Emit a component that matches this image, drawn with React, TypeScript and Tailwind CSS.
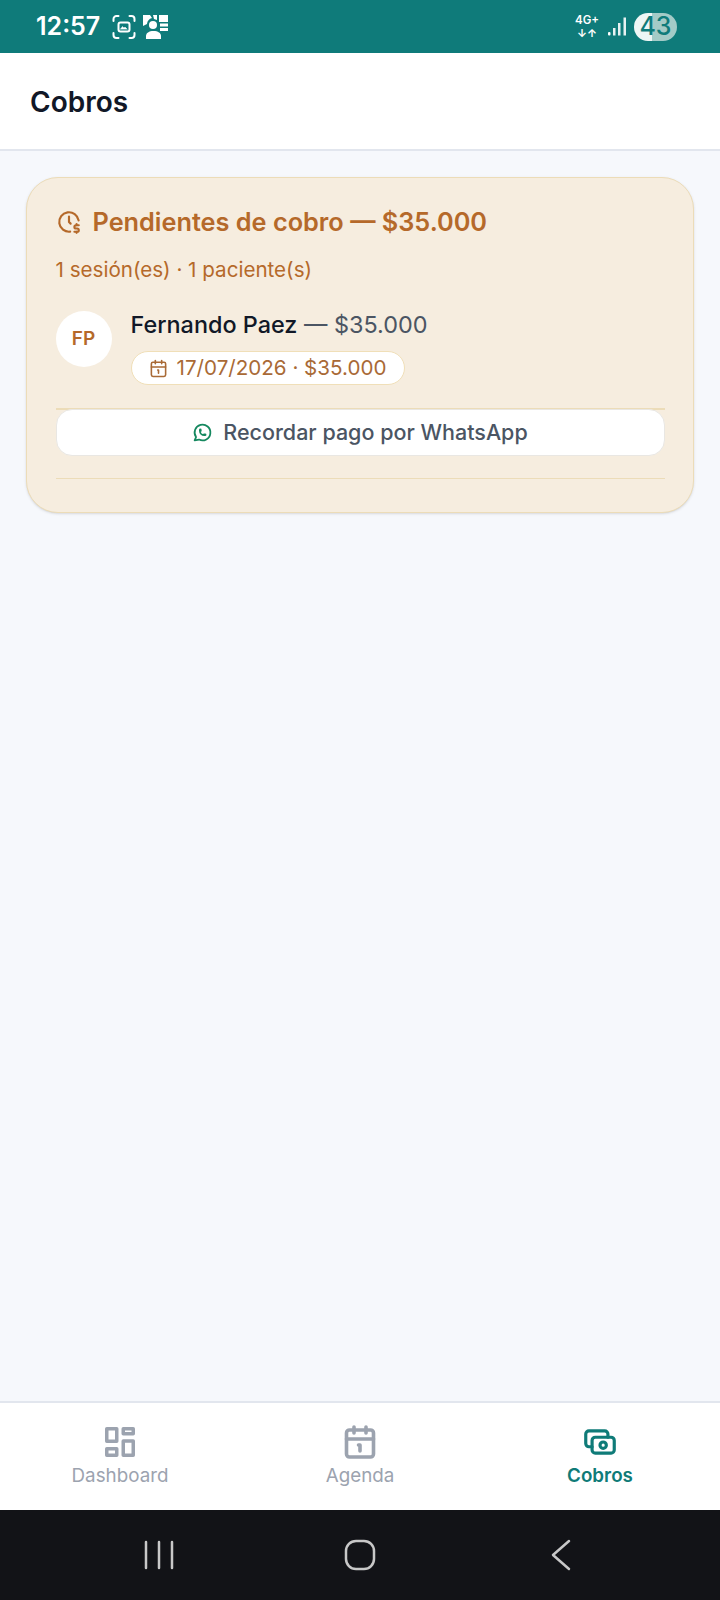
import React from 'react';
import { Calendar1 } from 'lucide-react';
import { TbClockDollar, TbBrandWhatsapp, TbCash } from 'react-icons/tb';

// Iconos de la barra de estado
const ScanIcon = () => (
  <svg width="24" height="24" viewBox="0 0 24 24" fill="none" stroke="white" strokeWidth="2" strokeLinecap="round">
    <path d="M1.500 6V4a3 3 0 0 1 3-3h2M17.500 1h2a3 3 0 0 1 3 3v2M22.500 18v2a3 3 0 0 1-3 3h-2M6.500 23h-2a3 3 0 0 1-3-3v-2" />
    <rect x="6.500" y="7.500" width="11" height="9" rx="2" />
    <path d="M8.500 14l2-2.500 1.500 1.500 1-1 2 2z" fill="white" strokeWidth="0.500" />
  </svg>
);

const ContactIcon = () => (
  <svg width="27" height="25" viewBox="0 0 27 25" fill="white">
    <path d="M1 1h7l2 3a7 7 0 0 0-5 6l-4 2z" />
    <path d="M11 1h4v5l-3-1z" />
    <circle cx="11" cy="11" r="4" />
    <path d="M4 25v-3c0-3 3-5 7.500-5s7.500 2 7.500 5v3z" />
    <rect x="17" y="1" width="9" height="7" />
    <rect x="18" y="9.500" width="8" height="3" />
    <rect x="18" y="14" width="8" height="3" />
  </svg>
);

const Signal = () => (
  <svg width="19" height="20" viewBox="0 0 19 20" fill="white">
    <rect x="0" y="15" width="2.500" height="3.500" rx="1" />
    <rect x="5" y="11" width="2.500" height="7.500" fillOpacity="0.9" />
    <rect x="10" y="6" width="2.500" height="12.500" fillOpacity="0.9" />
    <rect x="15.500" y="0.500" width="2.500" height="18" fillOpacity="0.9" />
  </svg>
);

const DashboardIcon = () => (
  <svg width="30" height="30" viewBox="0 0 30 30" fill="none" stroke="#9ca3af" strokeWidth="3.500" strokeLinejoin="round">
    <rect x="1.750" y="1.750" width="10" height="12.500" />
    <rect x="18.250" y="1.750" width="10" height="5" />
    <rect x="1.750" y="21.750" width="10" height="6.500" />
    <rect x="18.250" y="14" width="10" height="14.250" />
  </svg>
);

const NavItem = ({ icon, label, active = false }: { icon: React.ReactNode; label: string; active?: boolean }) => (
  <div className="flex-1 flex flex-col items-center">
    <div className="h-[36px] flex items-center justify-center">{icon}</div>
    <span className={`text-[18.800px] leading-[24px] mt-[4px] ${active ? 'font-semibold text-[#0f7b78]' : 'text-[#9ca3af]'}`}>
      {label}
    </span>
  </div>
);

export default function App() {
  return (
    <div className="w-[720px] h-[1600px] flex flex-col overflow-hidden bg-[#f6f8fc] font-['Inter',sans-serif]">
      {/* Barra de estado */}
      <div className="h-[53px] shrink-0 bg-[#0f7b7a] flex items-center justify-between pl-[36px] pr-[43px]">
        <div className="flex items-center">
          <span className="text-white text-[25px] font-semibold leading-none mr-[12px]">12:57</span>
          <ScanIcon />
          <span className="ml-[6px] flex"><ContactIcon /></span>
        </div>
        <div className="flex items-center">
          <div className="flex flex-col items-center text-white mr-[9px]">
            <span className="text-[11.500px] font-semibold leading-[13px]">4G+</span>
            <span className="text-[11px] font-bold leading-[13px]">↓↑</span>
          </div>
          <Signal />
          <div className="ml-[7px] w-[43px] h-[28px] rounded-full flex items-center justify-center bg-[linear-gradient(90deg,#eef6f5_0,#eef6f5_42%,#a3cbc7_42%,#a3cbc7_100%)] text-[#0f7b7a] text-[25px] font-medium leading-none">
            43
          </div>
        </div>
      </div>

      {/* Encabezado */}
      <header className="h-[98px] shrink-0 bg-white border-b-2 border-[#e2e6ee] flex items-center px-[30px]">
        <h1 className="text-[28px] font-semibold text-[#111827] pt-[2px]">Cobros</h1>
      </header>

      {/* Contenido */}
      <main className="flex-1 px-[26px] pt-[26px]">
        <section className="bg-[#f6eddf] border-[1.500px] border-[#ecdcb8] rounded-[32px] px-[28.500px] pt-[29px] pb-[33px] shadow-sm">
          <div className="flex items-center gap-[11px] text-[#b5692a] h-[30px]">
            <TbClockDollar size={26} />
            <h2 className="text-[25.300px] font-semibold leading-[30px]">Pendientes de cobro — $35.000</h2>
          </div>
          <p className="text-[20.600px] leading-[28px] text-[#b5692a] mt-[19px]">1 sesión(es) · 1 paciente(s)</p>

          <div className="flex gap-[19px] mt-[27px]">
            <div className="w-[56px] h-[56px] rounded-full bg-white flex items-center justify-center text-[#b5692a] text-[19px] font-semibold">
              FP
            </div>
            <div>
              <div className="text-[23.400px] leading-[28px]">
                <span className="text-[#111827] font-medium">Fernando Paez</span>
                <span className="text-[#4b5563]"> — $35.000</span>
              </div>
              <div className="mt-[12px] h-[34px] w-[274px] rounded-full bg-white border-[1.500px] border-[#f0dfb8] flex items-center justify-center gap-[9px] text-[#a96a36] text-[20.600px]">
                <Calendar1 size={19} strokeWidth={2} />
                <span>17/07/2026 · $35.000</span>
              </div>
            </div>
          </div>

          <div className="mt-[23px] border-t-2 border-[#ecdcb8]">
            <button className="-mt-[1px] w-full h-[47px] rounded-[16px] bg-white border border-[#e9e7e3] flex items-center justify-center gap-[10px] text-[#4b5563] text-[21.500px] font-medium">
              <TbBrandWhatsapp size={21} className="text-[#15885f]" />
              <span>Recordar pago por WhatsApp</span>
            </button>
          </div>
          <div className="mt-[22px] border-t border-[#ecdcb8]" />
        </section>
      </main>

      {/* Navegación inferior */}
      <nav className="h-[109px] shrink-0 bg-white border-t-2 border-[#e2e6ee] flex pt-[21px]">
        <NavItem label="Dashboard" icon={<DashboardIcon />} />
        <NavItem label="Agenda" icon={<Calendar1 size={36} strokeWidth={2.400} className="text-[#9ca3af]" />} />
        <NavItem label="Cobros" active icon={<TbCash size={38} className="text-[#0f7b78]" />} />
      </nav>

      {/* Barra del sistema */}
      <div className="h-[90px] shrink-0 bg-[#121317] flex items-center justify-center">
        <div className="w-[201px] flex justify-center">
          <svg width="30" height="30" viewBox="0 0 30 30" fill="none" stroke="#c8c8c8" strokeWidth="2.500" strokeLinecap="round">
            <path d="M2 2v26M15 2v26M28 2v26" />
          </svg>
        </div>
        <div className="w-[201px] flex justify-center">
          <svg width="32" height="32" viewBox="0 0 32 32" fill="none" stroke="#c8c8c8" strokeWidth="2.500">
            <rect x="2" y="2" width="28" height="28" rx="10" />
          </svg>
        </div>
        <div className="w-[201px] flex justify-center">
          <svg width="20" height="32" viewBox="0 0 20 32" fill="none" stroke="#c8c8c8" strokeWidth="2.500" strokeLinecap="round" strokeLinejoin="round">
            <path d="M18 2L2 16l16 14" />
          </svg>
        </div>
      </div>
    </div>
  );
}
